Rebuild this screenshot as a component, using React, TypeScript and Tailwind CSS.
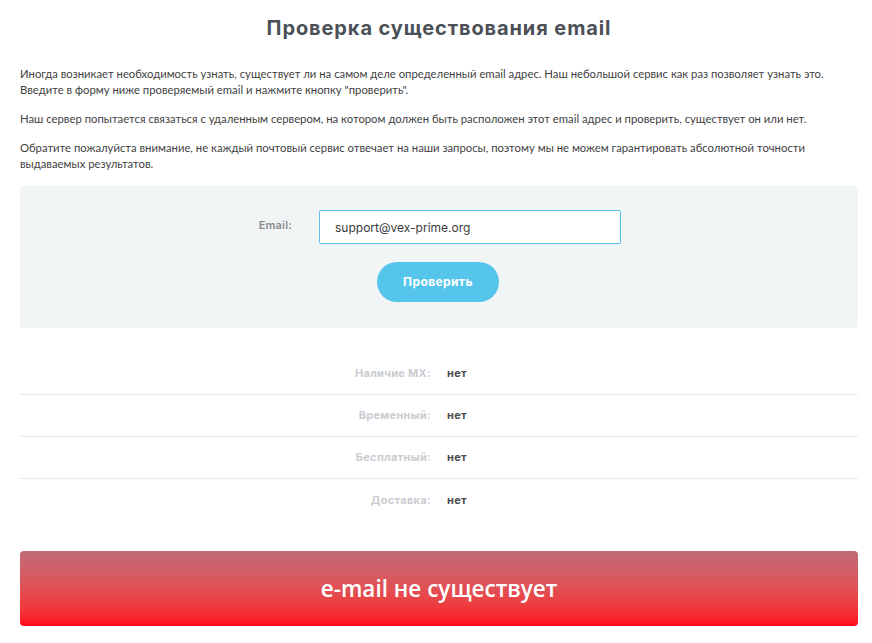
import React, { useState } from 'react'

const rows = [
  { label: 'Наличие MX:', value: 'нет' },
  { label: 'Временный:', value: 'нет' },
  { label: 'Бесплатный:', value: 'нет' },
  { label: 'Доставка:', value: 'нет' },
]

const head = { fontFamily: 'Inter, "Noto Sans", sans-serif' }
const body = { fontFamily: 'Lato, "Noto Sans", sans-serif' }

export default function App() {
  const [email, setEmail] = useState('support@vex-prime.org')

  return (
    <div className="h-screen overflow-hidden bg-white pl-5 pr-[14px]">
      <h1 className="pt-[13px] text-center text-[20px] font-bold tracking-[0.9px] text-[#4b5056]" style={head}>
        Проверка существования email
      </h1>

      <div className="mt-[23px] text-[11.3px] leading-4 text-[#3f3f3f]" style={body}>
        <p>
          Иногда возникает необходимость узнать, существует ли на самом деле определенный email адрес. Наш небольшой сервис как раз позволяет узнать это.
          <br />
          Введите в форму ниже проверяемый email и нажмите кнопку "проверить".
        </p>
        <p className="mt-[13px]">
          Наш сервер попытается связаться с удаленным сервером, на котором должен быть расположен этот email адрес и проверить, существует он или нет.
        </p>
        <p className="mt-[13px]">
          Обратите пожалуйста внимание, не каждый почтовый сервис отвечает на наши запросы, поэтому мы не можем гарантировать абсолютной точности выдаваемых результатов.
        </p>
      </div>

      <div className="mt-[14px] h-[142px] rounded bg-[#f1f5f6] pt-6">
        <div className="flex items-center">
          <label className="w-[272px] pb-[3px] text-right text-[11px] font-semibold tracking-[0.2px] text-[#8a8c8e]" style={head}>
            Email:
          </label>
          <input
            value={email}
            onChange={(e) => setEmail(e.target.value)}
            className="ml-[27px] h-[34px] w-[302px] rounded-[2px] border border-[#5cc1ea] bg-white px-[15px] text-[12px] text-[#3a3a3a] outline-none"
            style={head}
          />
        </div>
        <div className="mt-[18px] flex justify-center pr-[2px]">
          <button className="h-10 w-[122px] rounded-full bg-[#56c5ec] text-[12px] font-bold tracking-[0.4px] text-white" style={head}>
            Проверить
          </button>
        </div>
      </div>

      <div className="mt-[25px]" style={head}>
        {rows.map((r, i) => (
          <div
            key={r.label}
            className={`flex h-[42px] items-center ${i < rows.length - 1 ? 'border-b border-[#e8eaeb]' : ''}`}
          >
            <span className="w-[411px] text-right text-[11px] font-bold tracking-[0.3px] text-[#c9ccd0]">{r.label}</span>
            <span className="ml-4 text-[11px] font-bold tracking-[0.3px] text-[#4a4d52]">{r.value}</span>
          </div>
        ))}
      </div>

      <div
        className="mt-[30px] flex h-[75px] items-center justify-center rounded bg-gradient-to-b from-[#c06b79] to-[#ff0019] text-[22.5px] font-semibold text-white"
        style={{ fontFamily: '"Open Sans", "Noto Sans", sans-serif' }}
      >
        e-mail не существует
      </div>
    </div>
  )
}
